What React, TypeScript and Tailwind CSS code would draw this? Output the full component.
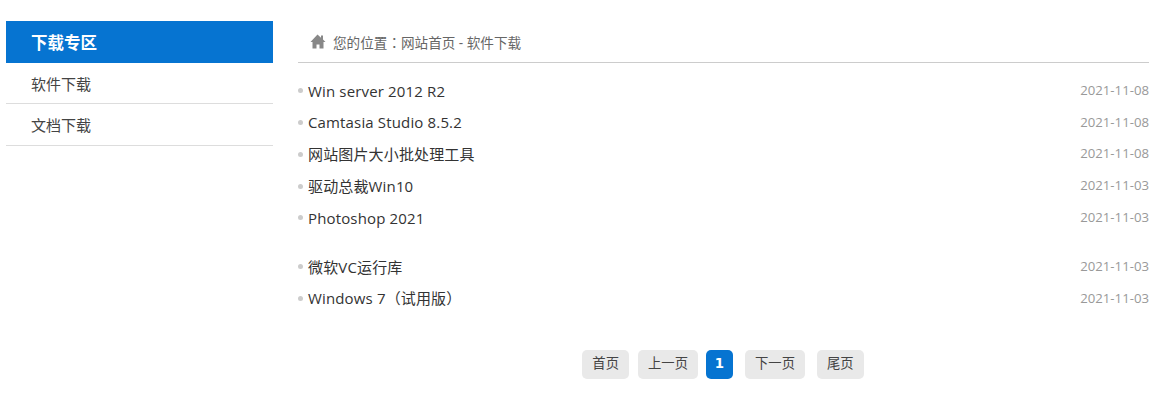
const items = [
  ['Win server 2012 R2', '2021-11-08'],
  ['Camtasia Studio 8.5.2', '2021-11-08'],
  ['网站图片大小批处理工具', '2021-11-08'],
  ['驱动总裁Win10', '2021-11-03'],
  ['Photoshop 2021', '2021-11-03'],
  ['微软VC运行库', '2021-11-03'],
  ['Windows 7（试用版）', '2021-11-03'],
];

const font = { fontFamily: '"Open Sans", "Noto Sans CJK SC", sans-serif' };

export default function App() {
  return (
    <div className="w-[1154px] h-[405px] bg-white flex pl-1.5 pt-[21px] overflow-hidden" style={font}>
      <div className="w-[267px]">
        <div className="h-[42px] bg-[#0674d1] text-white text-[16.5px] font-bold pl-[25px] pt-0.5 flex items-center">下载专区</div>
        <div className="h-[41px] border-b border-[#ddd] pl-[25px] pt-0.5 flex items-center text-[15px] text-[#444]">软件下载</div>
        <div className="h-[42px] border-b border-[#ddd] pl-[25px] pt-0.5 flex items-center text-[15px] text-[#444]">文档下载</div>
      </div>
      <div className="w-[851px] ml-[25px]">
        <div className="h-[42px] border-b border-[#ccc] pl-[11px] flex items-center gap-[7px] text-[13.6px] text-[#666]">
          <svg width="17" height="15" viewBox="0 0 17 15" fill="#888"><path d="M8.5 0.5 12 3.7V1.5h2v4l2.5 2.5h-2v6.5h-4v-4h-3v4h-4V8h-2z" /></svg>
          <span className="pt-0.5">您的位置<span className="font-['Noto_Sans_CJK_TC']">：</span>网站首页 - 软件下载</span>
        </div>
        <div className="pt-3">
          {items.map(([t, d], i) => (
            <div key={t} className={`h-[31.75px] flex items-center justify-between ${i === 5 ? 'mt-[17.25px]' : ''}`}>
              <div className={`flex items-center text-[15px] tracking-[0.15px] text-[#333] ${i === 6 ? "font-['Open_Sans','Noto_Sans_CJK_TC']" : ''}`}>
                <span className="w-[5px] h-[5px] rounded-full bg-[#ccc] mr-[5px]" />
                {t}
              </div>
              <span className="text-[13.2px] text-[#999]">{d}</span>
            </div>
          ))}
        </div>
        <div className="flex justify-center mt-[35px] text-[13.33px] text-[#444] pr-[1px]">
          <a className="h-[29px] px-[10px] rounded-[5px] bg-[#e9e9e9] flex items-center">首页</a>
          <a className="h-[29px] px-[10px] ml-[9px] rounded-[5px] bg-[#e9e9e9] flex items-center">上一页</a>
          <a className="h-[29px] w-[27px] ml-2 justify-center rounded-[5px] bg-[#0674d1] text-white font-bold flex items-center font-['DejaVu_Sans']">1</a>
          <a className="h-[29px] px-[10px] ml-3 rounded-[5px] bg-[#e9e9e9] flex items-center">下一页</a>
          <a className="h-[29px] px-[10px] ml-3 rounded-[5px] bg-[#e9e9e9] flex items-center">尾页</a>
        </div>
      </div>
    </div>
  );
}
